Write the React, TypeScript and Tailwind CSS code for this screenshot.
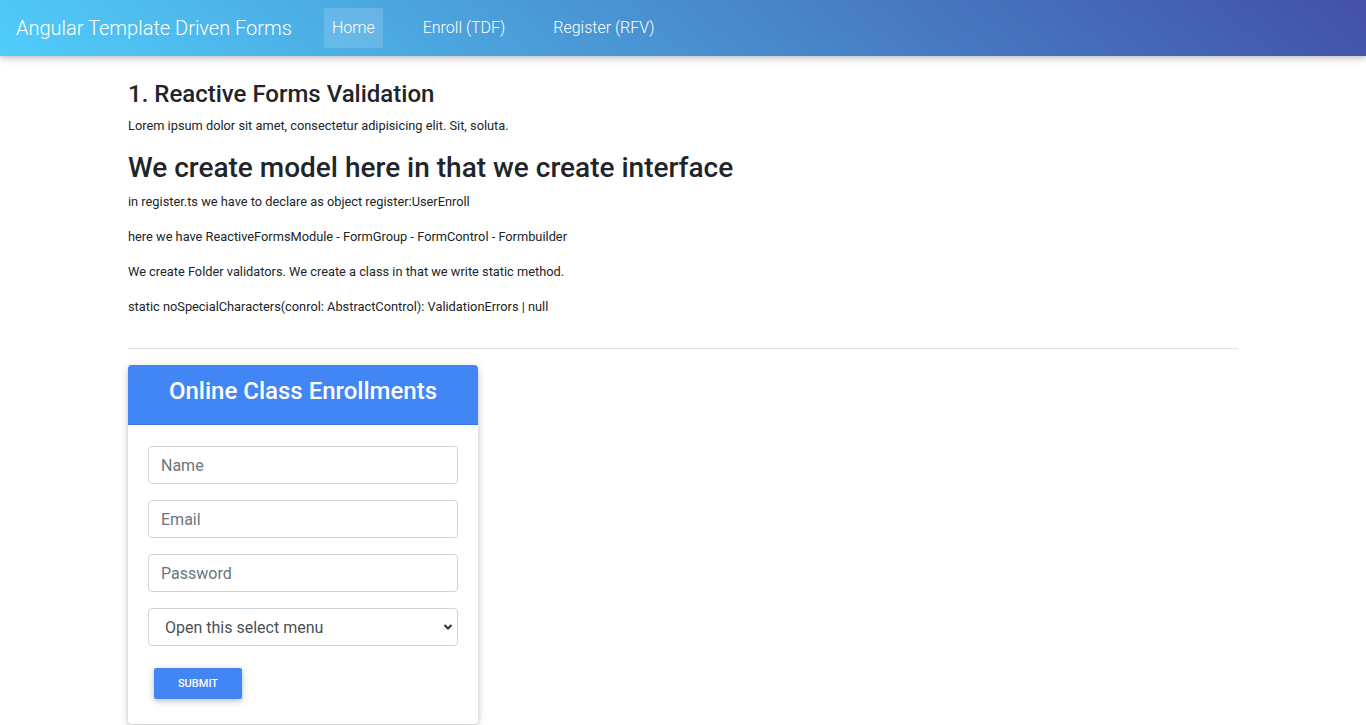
import React from 'react';

const navLinks = [
  { label: 'Home', active: true },
  { label: 'Enroll (TDF)', active: false },
  { label: 'Register (RFV)', active: false },
];

const notes = [
  'in register.ts we have to declare as object register:UserEnroll',
  'here we have ReactiveFormsModule - FormGroup - FormControl - Formbuilder',
  'We create Folder validators. We create a class in that we write static method.',
  'static noSpecialCharacters(conrol: AbstractControl): ValidationErrors | null',
];

export default function App() {
  return (
    <div className="min-h-screen bg-white text-[#212529] font-['Roboto',sans-serif]">
      <nav className="h-14 flex items-center px-4 bg-[linear-gradient(40deg,#50cdfa,#4250a6)] shadow-[0_2px_5px_0_rgba(0,0,0,0.16),0_2px_10px_0_rgba(0,0,0,0.12)]">
        <span className="text-white text-[20px] font-light mr-[32px]">Angular Template Driven Forms</span>
        <ul className="flex items-center gap-[32px]">
          {navLinks.map((link) => (
            <li key={link.label}>
              <a
                href="#"
                className={`block px-2 h-10 leading-10 text-white text-[16px] font-light ${
                  link.active ? 'bg-white/15' : ''
                }`}
              >
                {link.label}
              </a>
            </li>
          ))}
        </ul>
      </nav>

      <div className="w-[1110px] mx-auto pt-[24px]">
        <h4 className="text-[24px] font-medium leading-[1.2] mb-[7px]">1. Reactive Forms Validation</h4>
        <p className="text-[12.8px] leading-[19px] mb-[16px]">
          Lorem ipsum dolor sit amet, consectetur adipisicing elit. Sit, soluta.
        </p>
        <h2 className="text-[28px] font-medium leading-[1.2] mb-[8px]">
          We create model here in that we create interface
        </h2>
        {notes.map((note) => (
          <p key={note} className="text-[12.8px] leading-[19px] mb-[16px]">
            {note}
          </p>
        ))}
        <hr className="border-0 border-t border-[#e0e0e0] mt-[32px] mb-[16px]" />

        <div className="w-[350px] rounded-[4px] bg-white shadow-[0_2px_5px_0_rgba(0,0,0,0.16),0_2px_10px_0_rgba(0,0,0,0.12)] overflow-hidden">
          <div className="h-[60px] bg-[#4285f4] flex justify-center pt-[10px] border-b border-[#3b78dc]">
            <h3 className="text-white text-[24px] leading-8 font-medium">Online Class Enrollments</h3>
          </div>
          <form className="px-5 pt-[21px] pb-[25px] flex flex-col gap-4">
            {['Name', 'Email', 'Password'].map((ph) => (
              <input
                key={ph}
                placeholder={ph}
                className="h-[38px] w-full rounded-[4px] border border-[#ced4da] px-3 text-[16px] text-[#495057] placeholder:text-[#6c757d] outline-none"
              />
            ))}
            <div className="relative">
              <select className="appearance-none h-[38px] w-full rounded-[4px] border border-[#ced4da] pl-4 pr-8 pt-[2px] text-[16px] text-[#495057] bg-white outline-none">
                <option>Open this select menu</option>
              </select>
              <svg
                className="absolute right-[5px] top-[14px] w-[10px] h-[10px] text-[#333] pointer-events-none"
                viewBox="0 0 10 10"
                fill="none"
                stroke="currentColor"
                strokeWidth="2"
              >
                <path d="M1.5 3 L5 6.5 L8.5 3" />
              </svg>
            </div>
            <div className="pt-[6px]">
              <button
                type="button"
                className="ml-[6px] w-[88px] h-[31px] rounded-[2px] bg-[#4285f4] text-white text-[11px] font-medium uppercase shadow-[0_2px_5px_0_rgba(0,0,0,0.16),0_2px_10px_0_rgba(0,0,0,0.12)]"
              >
                Submit
              </button>
            </div>
          </form>
        </div>
      </div>
    </div>
  );
}
